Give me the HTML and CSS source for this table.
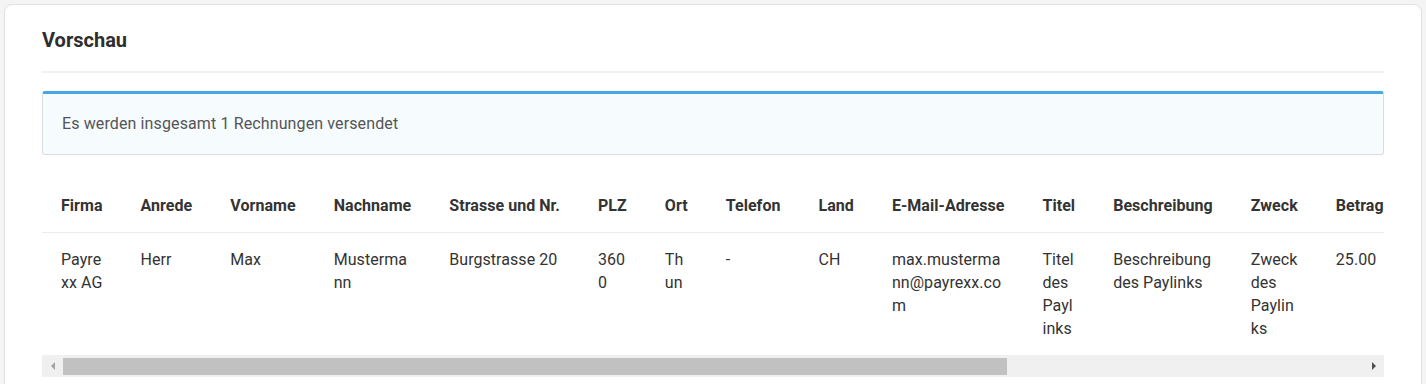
FILE: index.html
```html
<!DOCTYPE html>
<html lang="de">
<head>
<meta charset="utf-8">
<title>Vorschau</title>
<link rel="stylesheet" href="styles.css">
</head>
<body>
<div class="card">
  <div class="card-header">
    <h2 class="card-title">Vorschau</h2>
  </div>
  <div class="alert">Es werden insgesamt 1 Rechnungen versendet</div>
  <div class="table-scroll">
    <table class="preview-table">
      <thead>
        <tr>
          <th>Firma</th>
          <th>Anrede</th>
          <th>Vorname</th>
          <th>Nachname</th>
          <th>Strasse und Nr.</th>
          <th>PLZ</th>
          <th>Ort</th>
          <th>Telefon</th>
          <th>Land</th>
          <th>E-Mail-Adresse</th>
          <th>Titel</th>
          <th>Beschreibung</th>
          <th>Zweck</th>
          <th>Betrag</th>
        </tr>
      </thead>
      <tbody>
        <tr>
          <td>Payrexx AG</td>
          <td>Herr</td>
          <td>Max</td>
          <td>Mustermann</td>
          <td>Burgstrasse 20</td>
          <td>3600</td>
          <td>Thun</td>
          <td>-</td>
          <td>CH</td>
          <td>max.mustermann@payrexx.com</td>
          <td>Titel des Paylinks</td>
          <td>Beschreibung des Paylinks</td>
          <td>Zweck des Paylinks</td>
          <td>25.00</td>
        </tr>
      </tbody>
    </table>
  </div>
  <div class="fake-scrollbar">
    <div class="sb-button sb-left"><span class="arrow arrow-left"></span></div>
    <div class="sb-track"><div class="sb-thumb"></div></div>
    <div class="sb-button sb-right"><span class="arrow arrow-right"></span></div>
  </div>
</div>
</body>
</html>
```

FILE: styles.css
```css
* {
  box-sizing: border-box;
}

html, body {
  margin: 0;
  padding: 0;
}

body {
  background: #f4f4f4;
  font-family: Roboto, "Liberation Sans", Arial, sans-serif;
  font-size: 16px;
  line-height: 23px;
  letter-spacing: 0.12px;
  color: #333;
  padding: 4px 4px 0 4px;
}

.card {
  background: #fff;
  border: 1px solid #e1e1e1;
  border-radius: 8px;
  padding: 23px 37px 40px 37px;
  min-height: 420px;
}

.card-header {
  padding-bottom: 19px;
  border-bottom: 2px solid #f1f1f1;
  margin-bottom: 18px;
}

.card-title {
  margin: 0;
  font-size: 20px;
  line-height: 24px;
  font-weight: 700;
  letter-spacing: 0;
  color: #2e2e2e;
}

.alert {
  background: #f6fbfe;
  border: 1px solid #dcdcdc;
  border-top: 3px solid #45a8e6;
  border-radius: 3px;
  padding: 18px 19px 19px 19px;
  color: #555;
}

.table-scroll {
  margin-top: 20px;
  overflow: hidden;
}

.preview-table {
  border-collapse: collapse;
  width: 100%;
}

.preview-table th,
.preview-table td {
  padding: 15px 19px;
  text-align: left;
  vertical-align: top;
}

.preview-table th {
  font-weight: 700;
  white-space: nowrap;
  letter-spacing: 0.05px;
  color: #333;
  padding-top: 19px;
}

.preview-table td {
  overflow-wrap: anywhere;
  letter-spacing: 0.05px;
  border-top: 1px solid #ececec;
}

.fake-scrollbar {
  display: flex;
  height: 22px;
  background: #f0f0f0;
}

.sb-button {
  width: 21px;
  display: flex;
  align-items: center;
  justify-content: center;
}

.sb-track {
  flex: 1;
  padding-top: 3px;
}

.sb-thumb {
  width: 944px;
  height: 17px;
  background: #c1c1c1;
}

.arrow {
  width: 0;
  height: 0;
  border-top: 4px solid transparent;
  border-bottom: 4px solid transparent;
}

.arrow-left {
  border-right: 4px solid #a3a3a3;
}

.arrow-right {
  border-left: 4px solid #505050;
}
```
